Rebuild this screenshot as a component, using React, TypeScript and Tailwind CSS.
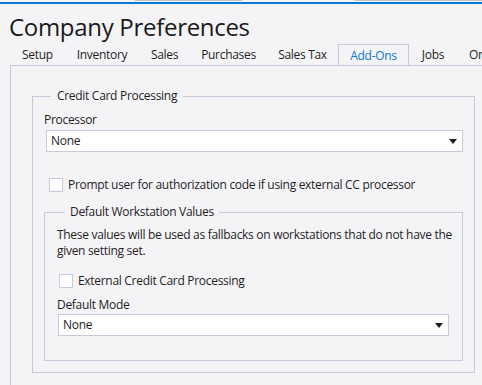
import React from "react";

const tabs = [
    { label: "Setup", w: "w-[55px] justify-center" },
    { label: "Inventory", w: "w-[74px] justify-center" },
    { label: "Sales", w: "w-[51px] justify-center" },
    { label: "Purchases", w: "w-[77px] justify-center" },
    { label: "Sales Tax", w: "w-[71px] justify-center" },
    { label: "Add-Ons", w: "w-[71px] justify-center", active: true },
    { label: "Jobs", w: "w-[48px] justify-center" },
    { label: "Online", w: "w-[60px] justify-start pl-[12px]" },
];

const Arrow = () => (
    <svg width="8" height="5" viewBox="0 0 8 5" className="shrink-0">
        <path d="M0 0 H8 L4 5 Z" fill="#1e1e1e" />
    </svg>
);

const Select = ({ value, className }: { value: string; className?: string }) => (
    <div className={`h-[22px] bg-white border border-[#c9c9dc] flex items-center justify-between pl-[4px] pr-[5px] ${className ?? ""}`}>
        <span>{value}</span>
        <Arrow />
    </div>
);

const Check = ({ label, className }: { label: string; className?: string }) => (
    <div className={`flex items-center gap-[5px] ${className ?? ""}`}>
        <div className="w-[14px] h-[14px] bg-white border border-[#c9c9dc]" />
        <span>{label}</span>
    </div>
);

const App: React.FC = () => {
    return (
        <div className="w-[482px] h-[385px] bg-[#f4f4f7] overflow-hidden text-[12px] text-[#1e1e1e] leading-[16px] tracking-[-0.3px] font-['Open_Sans',sans-serif]">
            {/* window chrome strip */}
            <div className="h-[1px] flex">
                <div className="ml-[135px] w-[107px] bg-[#c4c4c4]" />
                <div className="ml-[113px] flex-1 bg-[#c4c4c4]" />
            </div>
            <div className="h-[1px]" />
            <div className="h-[2px] bg-[#0a78d2]" />

            {/* title */}
            <div className="pl-[9px] pt-[7px] h-[40px] text-[24px] leading-[32px] text-[#1a1a1a]">
                Company Preferences
            </div>

            {/* tabs */}
            <div className="flex pl-[10px] h-[21px] whitespace-nowrap overflow-hidden">
                {tabs.map((t) => (
                    <div
                        key={t.label}
                        className={`${t.w} shrink-0 flex items-center ${
                            t.active
                                ? "border-t border-x border-[#c9c9dc] text-[#0a78d2] bg-[#f4f4f7] relative z-10 h-[22px]"
                                : ""
                        }`}
                    >
                        {t.label}
                    </div>
                ))}
            </div>

            {/* panel */}
            <div className="ml-[10px] border-t border-l border-[#c9c9dc] h-[330px] pl-[21px] pr-[7px] pt-[22px]">
                <fieldset className="border border-[#c9c9dc] h-[285px] px-[11px]">
                    <legend className="ml-[7px] px-[6px]">Credit Card Processing</legend>
                    <div className="mt-[8px]">Processor</div>
                    <Select value="None" className="mt-[2px] ml-[2px]" />
                    <Check label="Prompt user for authorization code if using external CC processor" className="mt-[25px] ml-[5px]" />

                    <fieldset className="border border-[#c9c9dc] mt-[11px] h-[157px] pl-[12px] pr-[13px]">
                        <legend className="ml-[8px] px-[5px]">Default Workstation Values</legend>
                        <div className="mt-[7px] mr-[-10px]">
                            These values will be used as fallbacks on workstations that do not have the given setting set.
                        </div>
                        <Check label="External Credit Card Processing" className="mt-[14px] ml-[2px]" />
                        <div className="mt-[8px]">Default Mode</div>
                        <Select value="None" className="mt-[1px] ml-[1px]" />
                    </fieldset>
                </fieldset>
            </div>
        </div>
    );
};

export default App;
